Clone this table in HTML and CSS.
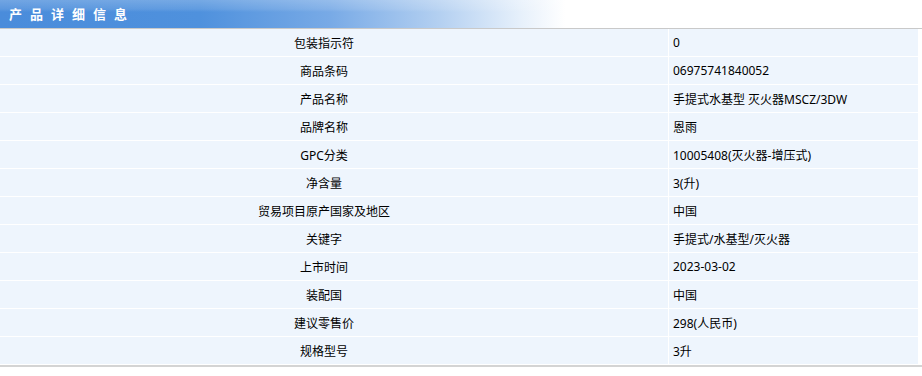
FILE: index.html
```html
<!DOCTYPE html>
<html lang="zh-CN">
<head>
<meta charset="utf-8">
<title>产品详细信息</title>
<link rel="stylesheet" href="styles.css">
</head>
<body>
<div class="panel">
  <div class="title"><span class="title-text">产品详细信息</span></div>
  <div class="rule"></div>
  <div class="table">
    <div class="k">包装指示符</div><div class="v">0</div>
    <div class="k">商品条码</div><div class="v">06975741840052</div>
    <div class="k">产品名称</div><div class="v">手提式水基型 灭火器MSCZ/3DW</div>
    <div class="k">品牌名称</div><div class="v">恩雨</div>
    <div class="k">GPC分类</div><div class="v">10005408(灭火器-增压式)</div>
    <div class="k">净含量</div><div class="v">3(升)</div>
    <div class="k">贸易项目原产国家及地区</div><div class="v">中国</div>
    <div class="k">关键字</div><div class="v">手提式/水基型/灭火器</div>
    <div class="k">上市时间</div><div class="v">2023-03-02</div>
    <div class="k">装配国</div><div class="v">中国</div>
    <div class="k">建议零售价</div><div class="v">298(人民币)</div>
    <div class="k">规格型号</div><div class="v">3升</div>
  </div>
  <div class="rule bottom"></div>
</div>
</body>
</html>
```

FILE: styles.css
```css
html, body {
  margin: 0;
  padding: 0;
  background: #ffffff;
}
body {
  font-family: "Noto Sans", "Noto Sans CJK SC", sans-serif;
  font-size: 12px;
  color: #000000;
}
.panel {
  width: 922px;
}
.title {
  height: 28px;
  display: flex;
  align-items: center;
  padding-left: 9px;
  background:
    linear-gradient(to bottom, rgba(255,255,255,0.22) 0, rgba(255,255,255,0.10) 9px, rgba(255,255,255,0) 12px),
    linear-gradient(to right, #4a8cdb 0, #4f91dd 200px, #78aae6 330px, #b4d0f1 440px, #e6f0fb 520px, #ffffff 565px, #ffffff 100%);
}
.title-text {
  color: #ffffff;
  font-family: "Noto Sans CJK SC", sans-serif;
  font-weight: bold;
  font-size: 13px;
  letter-spacing: 8px;
  line-height: 28px;
}
.rule {
  height: 1px;
  background: #c9c9c9;
}
.rule.bottom {
  height: 2px;
  background: #d4d4d4;
}
.table {
  display: grid;
  grid-template-columns: 668px 249px;
  grid-auto-rows: 27px;
  gap: 1px;
  padding-bottom: 1px;
  background: #ffffff;
}
.k, .v {
  background: #eef5fd;
  display: flex;
  align-items: center;
  white-space: nowrap;
}
.k {
  justify-content: center;
  padding-right: 20px;
}
.v {
  padding-left: 4px;
}
```
